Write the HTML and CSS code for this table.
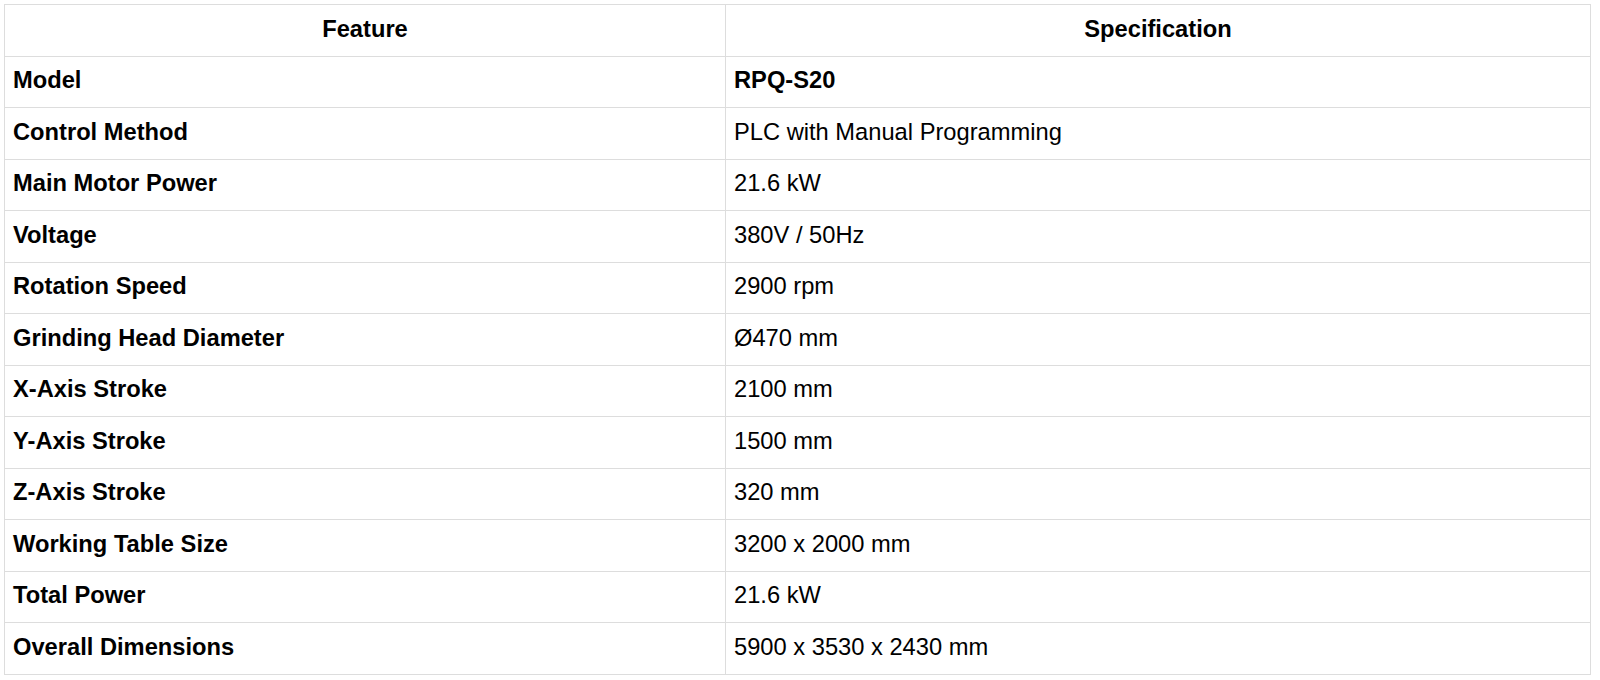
FILE: index.html
```html
<!DOCTYPE html>
<html lang="en">
<head>
<meta charset="utf-8">
<title>Specifications</title>
<link rel="stylesheet" href="styles.css">
</head>
<body>
<table class="spec">
  <thead>
    <tr><th class="col-feature">Feature</th><th>Specification</th></tr>
  </thead>
  <tbody>
    <tr><td class="name">Model</td><td class="strong">RPQ-S20</td></tr>
    <tr><td class="name">Control Method</td><td>PLC with Manual Programming</td></tr>
    <tr><td class="name">Main Motor Power</td><td>21.6 kW</td></tr>
    <tr><td class="name">Voltage</td><td>380V / 50Hz</td></tr>
    <tr><td class="name">Rotation Speed</td><td>2900 rpm</td></tr>
    <tr><td class="name">Grinding Head Diameter</td><td>Ø470 mm</td></tr>
    <tr><td class="name">X-Axis Stroke</td><td>2100 mm</td></tr>
    <tr><td class="name">Y-Axis Stroke</td><td>1500 mm</td></tr>
    <tr><td class="name">Z-Axis Stroke</td><td>320 mm</td></tr>
    <tr><td class="name">Working Table Size</td><td>3200 x 2000 mm</td></tr>
    <tr><td class="name">Total Power</td><td>21.6 kW</td></tr>
    <tr><td class="name">Overall Dimensions</td><td>5900 x 3530 x 2430 mm</td></tr>
  </tbody>
</table>
</body>
</html>
```
FILE: styles.css
```css
html, body {
  margin: 0;
  padding: 0;
  background: #ffffff;
}
body {
  padding: 4px;
  font-family: "Liberation Sans", Arial, sans-serif;
  color: #000;
}
.spec {
  border-collapse: collapse;
  width: 1587px;
  font-size: 23.7px;
  table-layout: fixed;
}
.spec th, .spec td {
  border: 1px solid #dddddd;
  height: 51.5px;
  padding: 0 8px 2px;
  box-sizing: border-box;
  text-align: left;
  vertical-align: middle;
  line-height: 1.15;
}
.spec th {
  text-align: center;
  font-weight: bold;
}
.spec .col-feature {
  width: 721px;
}
.spec .name, .spec .strong {
  font-weight: bold;
}
```
